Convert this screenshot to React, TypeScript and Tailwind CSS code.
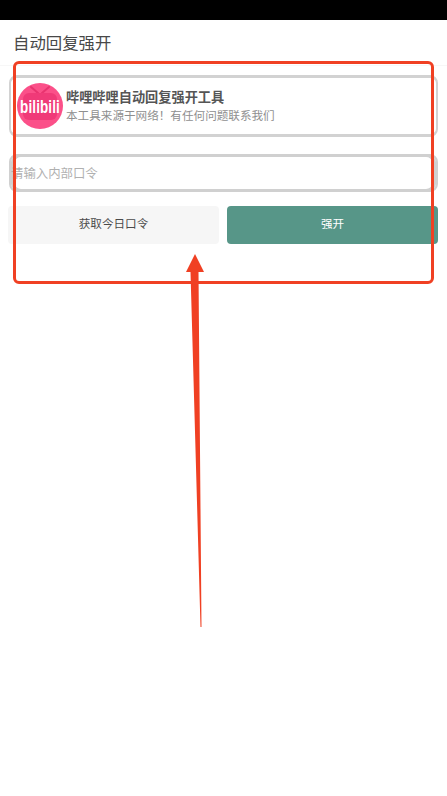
const cjk = "font-['Roboto','Noto_Sans_CJK_SC',sans-serif]";

function BiliLogo() {
  return (
    <div className="relative flex h-[46px] w-[46px] shrink-0 items-center justify-center overflow-hidden rounded-full bg-[#fb5089]">
      <svg className="absolute inset-0" width="46" height="46" viewBox="0 0 46 46" fill="none">
        <path d="M14 4l7 6M32 4l-7 6" stroke="#e8336f" strokeWidth="2" strokeLinecap="round" />
        <rect x="6" y="10" width="34" height="27" rx="6" fill="#f03a78" />
      </svg>
      <span className="relative mt-[4px] scale-y-[1.35] font-['Liberation_Sans',sans-serif] text-[13.5px] leading-none font-bold tracking-[0.1px] text-white">
        bilibili
      </span>
    </div>
  );
}

export default function App() {
  return (
    <div className={`relative min-h-[796px] bg-white ${cjk}`}>
      <div className="h-5 bg-black" />
      <header className="flex h-[46px] items-center border-b border-[#f7f7f7] pl-[13px] pt-[3px] text-[16.4px] text-[#484848]">
        自动回复强开
      </header>

      <div className="flex flex-col px-[9px] pt-[9px]">
        <div className="flex h-[62px] items-center gap-[3px] rounded-lg border-2 border-y-[3px] border-[#d2d2d2] pl-1.5">
          <BiliLogo />
          <div className="flex flex-col pt-px">
            <span className="text-[13.2px] leading-[18px] font-semibold text-[#555555]">哔哩哔哩自动回复强开工具</span>
            <span className="text-[11.6px] leading-[18px] text-[#8f8f8f]">本工具来源于网络！有任何问题联系我们</span>
          </div>
        </div>

        <div className="mt-[17px] flex h-[38px] items-center rounded-lg border-2 border-y-[3px] border-[#d0d0d0] pt-[2px] text-[12.4px] text-[#b0b0b0] shadow-[inset_4px_0_0_#d0d0d0,inset_-4px_0_0_#d0d0d0]">
          请输入内部口令
        </div>

        <div className="mt-[14px] -ml-px grid grid-cols-2 gap-2">
          <button type="button" className="h-[38px] rounded bg-[#f6f6f6] text-[11.6px] text-[#4a4a4a]">
            获取今日口令
          </button>
          <button type="button" className="h-[38px] rounded bg-[#579688] text-[11.6px] text-white">
            强开
          </button>
        </div>
      </div>

      {/* hand drawn annotation on top of the page */}
      <div className="pointer-events-none absolute top-[61px] left-[13px] h-[223px] w-[421px] rounded-md border-[3px] border-[#f04023]" />
      <svg className="pointer-events-none absolute top-[250px] left-[180px]" width="30" height="380" viewBox="0 0 30 380">
        <path d="M15 4L24 22H18.5L21.5 377H20.5L10.5 22H6Z" fill="#f04023" />
      </svg>
    </div>
  );
}
